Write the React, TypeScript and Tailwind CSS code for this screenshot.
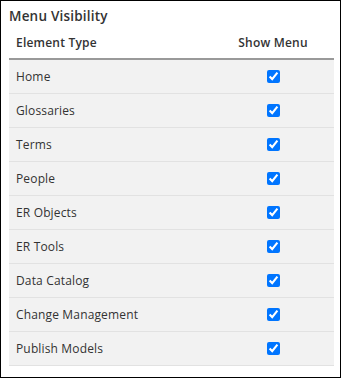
import React from "react";

const items = [
  "Home",
  "Glossaries",
  "Terms",
  "People",
  "ER Objects",
  "ER Tools",
  "Data Catalog",
  "Change Management",
  "Publish Models",
];

export default function App() {
  return (
    <div
      className="w-[341px] h-[378px] bg-white border border-black pl-[8px] pr-[6px]"
      style={{ fontFamily: '"Open Sans", "Noto Sans", sans-serif' }}
    >
      <div className="h-[27px] flex items-center pt-[3px] text-[13.5px] font-semibold text-[#333] tracking-[0.2px]">
        Menu Visibility
      </div>
      <div className="flex h-[32px] items-center border-b-2 border-[#999] text-[12px] font-semibold text-[#333] tracking-[0.2px]">
        <div className="w-[203px] pl-[7px]">Element Type</div>
        <div className="flex-1 text-center">Show Menu</div>
      </div>
      {items.map((t) => (
        <div
          key={t}
          className="flex h-[34px] items-center border-b border-[#e2e2e2] bg-[#f2f2f2] text-[12px] text-[#333] tracking-[0.15px]"
        >
          <div className="w-[203px] pl-[7px]">{t}</div>
          <div className="flex-1 flex justify-center">
            <input type="checkbox" checked readOnly className="w-[13px] h-[13px] m-0" />
          </div>
        </div>
      ))}
    </div>
  );
}
